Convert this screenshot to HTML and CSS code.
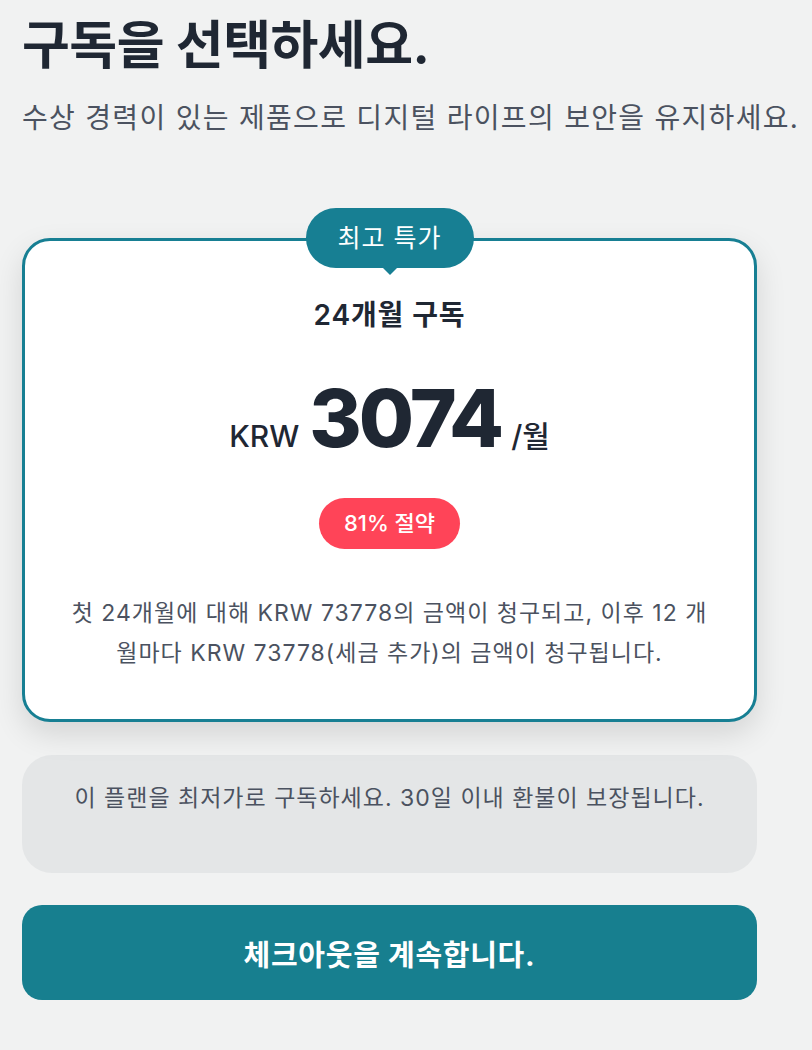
FILE: index.html
```html
<!DOCTYPE html>
<html lang="ko">
<head>
    <meta charset="UTF-8">
    <meta name="viewport" content="width=device-width, initial-scale=1.0">
    <title>구독을 선택하세요</title>
    <link rel="stylesheet" href="styles.css">
</head>
<body>
    <div class="page">
        <header class="intro">
            <h1>구독을 선택하세요.</h1>
            <p>수상 경력이 있는 제품으로 디지털 라이프의 보안을 유지하세요.</p>
        </header>
        <div class="plans">
            <div class="plan">
                <div class="badge">최고 특가</div>
                <h2>24개월 구독</h2>
                <div class="price">
                    <span class="currency">KRW</span>
                    <span class="amount">3074</span>
                    <span class="period">/월</span>
                </div>
                <div class="save">81% 절약</div>
                <p class="terms">첫 24개월에 대해 KRW 73778의 금액이 청구되고, 이후 12 개월마다 KRW 73778(세금 추가)의 금액이 청구됩니다.</p>
            </div>
            <div class="note">이 플랜을 최저가로 구독하세요. 30일 이내 환불이 보장됩니다.</div>
            <button class="checkout">체크아웃을 계속합니다.</button>
        </div>
    </div>
</body>
</html>
```

FILE: styles.css
```css
body {
    margin: 0;
    background-color: #f1f2f2;
    font-family: Inter, "Noto Sans CJK KR", sans-serif;
    color: #1f2733;
}
.page {
    padding: 14px 22px 40px;
}
.intro h1 {
    margin: 0;
    font-size: 52px;
    font-weight: 700;
    line-height: 64px;
    letter-spacing: -0.5px;
}
.intro p {
    margin: 20px 0 0;
    font-size: 28px;
    line-height: 40px;
    letter-spacing: 1.3px;
    color: #4b5260;
    white-space: nowrap;
}
.plans {
    width: 735px;
    margin-top: 100px;
}
.plan {
    position: relative;
    background-color: #fff;
    border: 3px solid #177f93;
    border-radius: 28px;
    box-shadow: 0 12px 30px rgba(0, 0, 0, 0.12);
    padding: 50px 40px 46px;
    text-align: center;
}
.badge {
    position: absolute;
    top: -33px;
    left: 50%;
    transform: translateX(-50%);
    background-color: #177f93;
    color: #fff;
    font-size: 25px;
    letter-spacing: 1px;
    line-height: 60px;
    padding: 0 32px;
    border-radius: 30px;
    white-space: nowrap;
}
.badge::after {
    content: "";
    position: absolute;
    left: 50%;
    bottom: -7px;
    margin-left: -8px;
    border-left: 8px solid transparent;
    border-right: 8px solid transparent;
    border-top: 8px solid #177f93;
}
.plan h2 {
    margin: 0;
    font-size: 28px;
    font-weight: 600;
    line-height: 48px;
    letter-spacing: 0.9px;
}
.price {
    display: flex;
    justify-content: center;
    align-items: baseline;
    gap: 10px;
    margin-top: 31px;
}
.currency {
    font-size: 30px;
    font-weight: 500;
}
.amount {
    font-size: 80px;
    font-weight: 800;
    letter-spacing: -3px;
    line-height: 96px;
}
.period {
    font-size: 30px;
    font-weight: 500;
}
.save {
    display: inline-block;
    margin-top: 32px;
    background-color: #ff4458;
    color: #fff;
    font-size: 22px;
    font-weight: 500;
    line-height: 51px;
    padding: 0 25px;
    border-radius: 26px;
}
.terms {
    margin: 44px 0 0;
    font-size: 23px;
    line-height: 40px;
    letter-spacing: 1px;
    color: #4b5260;
}
.note {
    margin-top: 33px;
    background-color: #e4e6e7;
    border-radius: 30px;
    padding: 27px 30px 59px;
    text-align: center;
    font-size: 23px;
    line-height: 32px;
    letter-spacing: 1px;
    color: #4b5260;
}
.checkout {
    display: block;
    width: 100%;
    margin-top: 32px;
    height: 95px;
    border: none;
    border-radius: 20px;
    background-color: #177f8f;
    color: #fff;
    font-family: inherit;
    font-size: 29px;
    font-weight: 700;
    letter-spacing: 0.7px;
    cursor: pointer;
}
```
